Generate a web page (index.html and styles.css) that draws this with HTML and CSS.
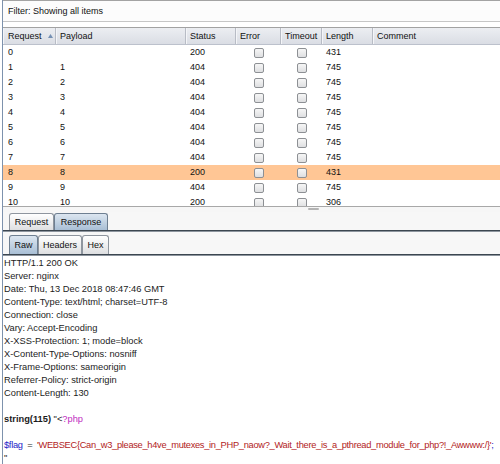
FILE: index.html
```html
<!DOCTYPE html>
<html>
<head>
<meta charset="utf-8">
<link rel="stylesheet" href="styles.css">
</head>
<body>
<div class="app">
  <div class="filter">Filter: Showing all items</div>
  <div class="table-wrap">
    <div class="row head">
      <div class="cell">Request <svg class="sort" width="5" height="4" viewBox="0 0 5 4"><polygon points="2.5,0 5,4 0,4" fill="#7590b3"/></svg></div>
      <div class="cell">Payload</div>
      <div class="cell">Status</div>
      <div class="cell">Error</div>
      <div class="cell">Timeout</div>
      <div class="cell">Length</div>
      <div class="cell last">Comment</div>
    </div>
    <div class="body">
      <div class="row"><div class="cell">0</div><div class="cell"></div><div class="cell">200</div><div class="cell chk"><span class="cb"></span></div><div class="cell chk"><span class="cb"></span></div><div class="cell">431</div><div class="cell"></div></div>
      <div class="row"><div class="cell">1</div><div class="cell">1</div><div class="cell">404</div><div class="cell chk"><span class="cb"></span></div><div class="cell chk"><span class="cb"></span></div><div class="cell">745</div><div class="cell"></div></div>
      <div class="row"><div class="cell">2</div><div class="cell">2</div><div class="cell">404</div><div class="cell chk"><span class="cb"></span></div><div class="cell chk"><span class="cb"></span></div><div class="cell">745</div><div class="cell"></div></div>
      <div class="row"><div class="cell">3</div><div class="cell">3</div><div class="cell">404</div><div class="cell chk"><span class="cb"></span></div><div class="cell chk"><span class="cb"></span></div><div class="cell">745</div><div class="cell"></div></div>
      <div class="row"><div class="cell">4</div><div class="cell">4</div><div class="cell">404</div><div class="cell chk"><span class="cb"></span></div><div class="cell chk"><span class="cb"></span></div><div class="cell">745</div><div class="cell"></div></div>
      <div class="row"><div class="cell">5</div><div class="cell">5</div><div class="cell">404</div><div class="cell chk"><span class="cb"></span></div><div class="cell chk"><span class="cb"></span></div><div class="cell">745</div><div class="cell"></div></div>
      <div class="row"><div class="cell">6</div><div class="cell">6</div><div class="cell">404</div><div class="cell chk"><span class="cb"></span></div><div class="cell chk"><span class="cb"></span></div><div class="cell">745</div><div class="cell"></div></div>
      <div class="row"><div class="cell">7</div><div class="cell">7</div><div class="cell">404</div><div class="cell chk"><span class="cb"></span></div><div class="cell chk"><span class="cb"></span></div><div class="cell">745</div><div class="cell"></div></div>
      <div class="row hl"><div class="cell">8</div><div class="cell">8</div><div class="cell">200</div><div class="cell chk"><span class="cb"></span></div><div class="cell chk"><span class="cb"></span></div><div class="cell">431</div><div class="cell"></div></div>
      <div class="row"><div class="cell">9</div><div class="cell">9</div><div class="cell">404</div><div class="cell chk"><span class="cb"></span></div><div class="cell chk"><span class="cb"></span></div><div class="cell">745</div><div class="cell"></div></div>
      <div class="row"><div class="cell">10</div><div class="cell">10</div><div class="cell">200</div><div class="cell chk"><span class="cb"></span></div><div class="cell chk"><span class="cb"></span></div><div class="cell">306</div><div class="cell"></div></div>
    </div>
  </div>
  <div class="splitter"><span class="handle"></span></div>
  <div class="tabbar main">
    <div class="tab t-request">Request</div>
    <div class="tab sel t-response">Response</div>
  </div>
  <div class="tabbar sub">
    <div class="tab sel t-raw">Raw</div>
    <div class="tab t-headers">Headers</div>
    <div class="tab t-hex">Hex</div>
  </div>
  <div class="resp"><div class="ln">HTTP/1.1 200 OK</div><div class="ln">Server: nginx</div><div class="ln">Date: Thu, 13 Dec 2018 08:47:46 GMT</div><div class="ln">Content-Type: text/html; charset=UTF-8</div><div class="ln">Connection: close</div><div class="ln">Vary: Accept-Encoding</div><div class="ln">X-XSS-Protection: 1; mode=block</div><div class="ln">X-Content-Type-Options: nosniff</div><div class="ln">X-Frame-Options: sameorigin</div><div class="ln">Referrer-Policy: strict-origin</div><div class="ln">Content-Length: 130</div><div class="ln"> </div><div class="ln"><b>string(115)</b> "&lt;<span class="kw">?php</span></div><div class="ln"> </div><div class="ln flag"><span class="var">$flag</span>  =  <span class="str">'WEBSEC{Can_w3_please_h4ve_mutexes_in_PHP_naow?_Wait_there_is_a_pthread_module_for_php?!_Awwww:/}'</span><span class="var">;</span></div><div class="ln">"</div></div>
</div>
</body>
</html>
```
FILE: styles.css
```css
html, body {
  margin: 0;
  padding: 0;
  background: #ffffff;
}
body {
  font-family: "Liberation Sans", Arial, sans-serif;
  font-size: 9px;
  color: #111;
  width: 500px;
  height: 464px;
  overflow: hidden;
}
.app {
  margin-left: 2px;
  border-left: 1px solid #7d92ad;
  height: 464px;
  display: flex;
  flex-direction: column;
}
.filter {
  border-top: 1px solid #a3a3a3;
  border-bottom: 1px solid #c6c6c6;
  background: #fcfcfc;
  height: 20px;
  line-height: 20px;
  padding-left: 5px;
  margin-bottom: 5px;
  white-space: nowrap;
}
.table-wrap {
  border-top: 1px solid #a2a2a2;
  border-bottom: 1px solid #a8a8a8;
  height: 178px;
  overflow: hidden;
  flex: none;
}
.row {
  display: grid;
  grid-template-columns: 53px 130px 50px 45px 41px 51px 1fr;
  height: 15px;
  line-height: 15px;
  white-space: nowrap;
}
.row.head {
  height: 16px;
  line-height: 16px;
  background: linear-gradient(#eceef2, #dadde4);
  border-bottom: 1px solid #bcc1cc;
}
.row.head .cell {
  border-right: 1px solid #b8bcc5;
  box-shadow: inset 1px 0 0 #f4f5f8;
}
.row.head .cell.last {
  border-right: none;
}
.cell {
  padding-left: 4px;
  overflow: hidden;
  display: flex;
  align-items: center;
}
.row.head .cell:first-child,
.body .row .cell:first-child {
  padding-left: 5px;
}
.sort {
  margin-left: 6px;
}
.cell.chk {
  justify-content: center;
  padding-left: 0;
}
.cb {
  display: block;
  width: 8px;
  height: 8px;
  border: 1px solid #8d9094;
  border-radius: 2px;
  background: linear-gradient(#f6f6f6, #dedfe1);
}
.row.hl {
  background: #ffc695;
}
.splitter {
  height: 5px;
  background: #f6f6f6;
  flex: none;
}
.handle {
  display: block;
  margin-left: 305px;
  margin-top: 1px;
  width: 11px;
  height: 2px;
  border-radius: 1px;
  background: #b3b3b3;
}
.tabbar {
  display: flex;
  background: #f7f7f7;
  padding-left: 6px;
  border-bottom: 1px solid #3c4650;
  box-shadow: 0 1px 0 #8d959e;
  flex: none;
  position: relative;
}
.tabbar.main {
  padding-top: 1px;
  height: 17px;
  margin-bottom: 1px;
}
.tabbar.sub {
  padding-top: 3px;
  height: 19px;
  margin-bottom: 1px;
}
.tab {
  box-sizing: border-box;
  border: 1px solid #8e959e;
  border-bottom: none;
  border-radius: 3px 3px 0 0;
  background: linear-gradient(#ffffff, #dedfe1);
  text-align: center;
  font-size: 9px;
  color: #111;
}
.tabbar.main .tab { line-height: 16px; }
.tabbar.sub .tab { line-height: 18px; }
.tab.sel {
  background: linear-gradient(#dce6f0, #a9bfd5);
  border-color: #6e7f91;
}
.t-request { width: 45px; }
.t-response { width: 54px; }
.t-raw { width: 29px; }
.t-headers { width: 44px; }
.t-hex { width: 27px; }
.resp {
  background: #ffffff;
  padding-top: 1px;
  padding-left: 1px;
  font-size: 9.3px;
  color: #1c1c1c;
  flex: 1;
}
.ln {
  height: 13px;
  line-height: 13px;
  white-space: pre;
}
.ln b {
  font-weight: bold;
}
.kw { color: #c02cc0; }
.var { color: #2323c8; }
.str { color: #b22323; }
.flag { letter-spacing: -0.3px; }
```
